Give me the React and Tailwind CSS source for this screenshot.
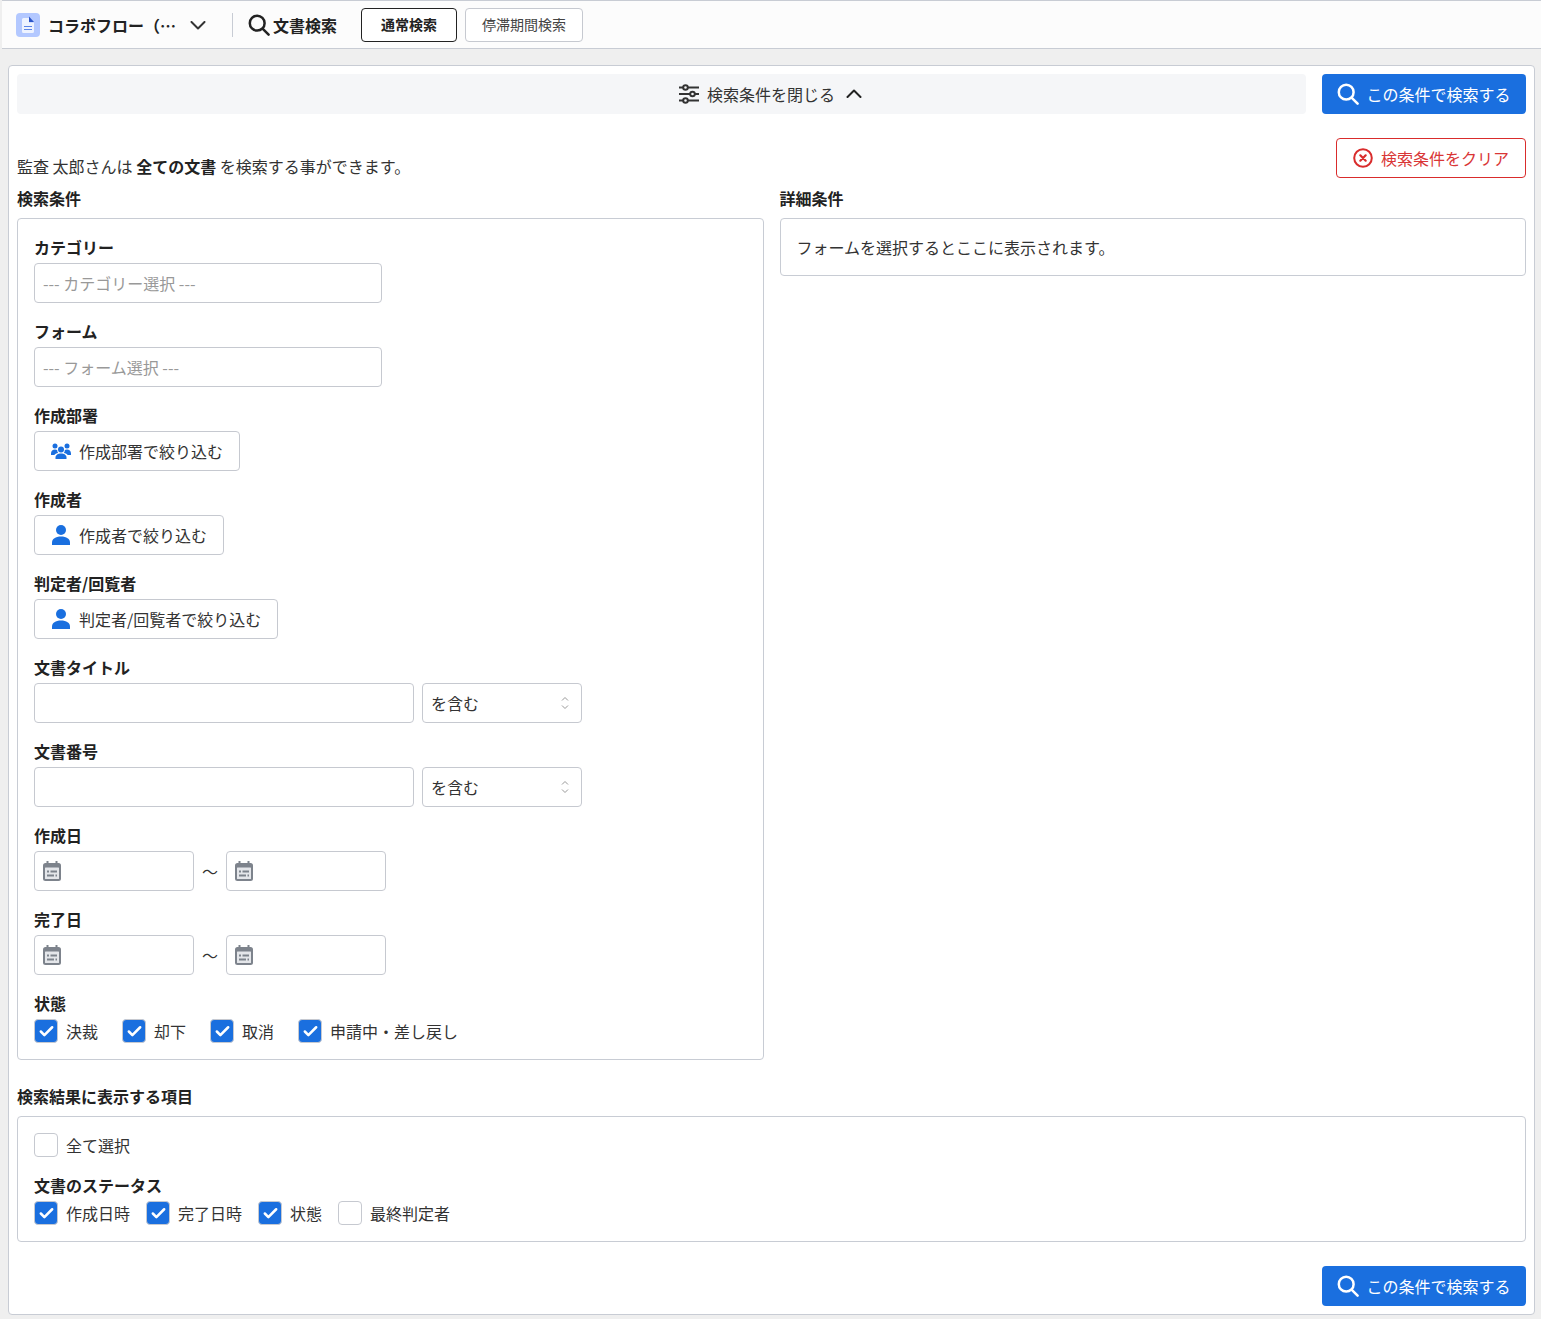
import { Check } from "lucide-react";

function SearchIcon({ className }) {
  return (
    <svg viewBox="0 0 22 22" className={className} fill="none" stroke="currentColor" strokeWidth="2.5" strokeLinecap="round">
      <circle cx="9.200" cy="9.200" r="7.400" />
      <path d="M14.800 14.800 20.600 20.600" />
    </svg>
  );
}

function Chevron({ up, className }) {
  return (
    <svg viewBox="0 0 16 9" className={"w-4 h-[9px] shrink-0 " + className} fill="none" stroke="currentColor" strokeWidth="2" strokeLinecap="round" strokeLinejoin="round">
      <path d={up ? "M1.500 8 8 1.500 14.500 8" : "M1.500 1 8 7.500 14.500 1"} />
    </svg>
  );
}

function DocIcon() {
  return (
    <svg viewBox="0 0 24 24" className="w-6 h-6 shrink-0">
      <rect width="24" height="24" rx="4" fill="#b3c8ff" />
      <path d="M6 6.500A1.500 1.500 0 0 1 7.500 5H13v4.500h5v9A1.500 1.500 0 0 1 16.500 20h-9A1.500 1.500 0 0 1 6 18.500z" fill="#eef3ff" />
      <path d="M13 3.500 18 9h-5z" fill="#2a55c8" />
      <path d="M8 13.500h8M8 16.500h8" stroke="#5b84e6" strokeWidth="1.200" />
    </svg>
  );
}

function SlidersIcon() {
  return (
    <svg viewBox="0 0 20 20" className="w-5 h-5 text-[#333]" fill="none" stroke="currentColor" strokeWidth="2">
      <path d="M0 3.500h4M9 3.500h11M0 10h11M16 10h4M0 16.500h4M9 16.500h11" />
      <circle cx="6.500" cy="3.500" r="2.300" />
      <circle cx="13.500" cy="10" r="2.300" />
      <circle cx="6.500" cy="16.500" r="2.300" />
    </svg>
  );
}

function ClearIcon() {
  return (
    <svg viewBox="0 0 20 20" className="w-5 h-5 text-[#d92c2c]" fill="none" stroke="currentColor" strokeWidth="2" strokeLinecap="round">
      <circle cx="10" cy="10" r="8.800" />
      <path d="M7.300 7.300 12.700 12.700M12.700 7.300 7.300 12.700" strokeWidth="2.200" />
    </svg>
  );
}

function PersonIcon() {
  return (
    <svg viewBox="0 0 20 20" className="w-5 h-5 shrink-0 text-[#1a6fdf]" fill="currentColor">
      <circle cx="10" cy="5" r="5" />
      <path d="M1 20v-2.500C1 14 4.500 11.500 10 11.500s9 2.500 9 6V20z" />
    </svg>
  );
}

function TeamIcon() {
  return (
    <svg viewBox="0 0 20 16" className="w-5 h-4 shrink-0 text-[#1a6fdf]" fill="currentColor">
      <circle cx="10" cy="6.500" r="3" />
      <circle cx="4" cy="3" r="2.500" />
      <circle cx="16" cy="3" r="2.500" />
      <path d="M4.500 16v-1.500C4.500 12 7 10.500 10 10.500s5.500 1.500 5.500 4V16z" />
      <path d="M0 10.500C0 8 1.800 6.500 4 6.500c.9 0 1.600.2 2.200.6a4.500 4.500 0 0 0 .9 3C5.300 10.500 4 11 3.400 12H0z" />
      <path d="M20 10.500C20 8 18.200 6.500 16 6.500c-.9 0-1.600.2-2.200.6a4.500 4.500 0 0 1-.9 3c1.800.4 3.100.9 3.700 1.900H20z" />
    </svg>
  );
}

function UpDownIcon() {
  return (
    <svg viewBox="0 0 8 14" className="w-2 h-[14px] text-[#999]" fill="none" stroke="currentColor" strokeWidth="1">
      <path d="M1 4.500 4 1.500 7 4.500M1 9.500 4 12.500 7 9.500" />
    </svg>
  );
}

function CalendarIcon() {
  return (
    <svg viewBox="0 0 18 20" className="w-[18px] h-5 shrink-0">
      <path d="M3.500 0h2v3h-2zM12.500 0h2v3h-2z" fill="#7d838c" />
      <rect y="2" width="18" height="18" rx="2.500" fill="#7d838c" />
      <rect x="2" y="6.500" width="14" height="11.500" rx="0.500" fill="#e4e6ea" />
      <path d="M4 9.500h2v2H4zM7.500 9.500H14v2H7.500zM4 13.500h7v2H4zM12.500 13.500H14v2h-1.500z" fill="#7d838c" />
    </svg>
  );
}

function Label({ children }) {
  return <div className="h-6 mb-1 text-base leading-6 font-bold text-[#222]">{children}</div>;
}

function Field({ label, children }) {
  return (
    <div className="mb-4">
      <Label>{label}</Label>
      {children}
    </div>
  );
}

function PickButton({ icon, children }) {
  return (
    <button className="h-10 flex items-center gap-2 px-4 border border-[#c6c9d0] rounded bg-white text-base text-[#333]">
      {icon}
      {children}
    </button>
  );
}

function TextWithMatch() {
  return (
    <div className="flex gap-2">
      <input className="w-[380px] h-10 border border-[#c6c9d0] rounded bg-white" />
      <div className="w-40 h-10 flex items-center justify-between pl-2 pr-[12px] border border-[#c6c9d0] rounded bg-white text-base text-[#333]">
        を含む
        <UpDownIcon />
      </div>
    </div>
  );
}

function DateBox() {
  return (
    <div className="w-40 h-10 flex items-center px-2 border border-[#c6c9d0] rounded bg-white">
      <CalendarIcon />
    </div>
  );
}

function DateRange() {
  return (
    <div className="flex items-center gap-2">
      <DateBox />
      <span className="w-4 text-base text-[#333]">〜</span>
      <DateBox />
    </div>
  );
}

function Checkbox({ checked, children }) {
  return (
    <label className="flex items-center gap-2 text-base leading-6 text-[#333]">
      {checked ? (
        <span className="w-6 h-6 flex items-center justify-center rounded bg-[#1a6fdf] border border-[#c6c9d0]">
          <Check size={17} strokeWidth={3.6} className="text-white" />
        </span>
      ) : (
        <span className="w-6 h-6 rounded bg-white border border-[#c6c9d0]" />
      )}
      {children}
    </label>
  );
}

function SearchButton() {
  return (
    <button className="w-[204px] h-10 flex items-center justify-center gap-[7px] rounded bg-[#1a6fdf] text-base text-white">
      <SearchIcon className="w-[22px] h-[22px]" />
      この条件で検索する
    </button>
  );
}

export default function App() {
  return (
    <div className="min-h-[1319px] bg-[#efefef] font-['Noto_Sans_CJK_JP','Noto_Sans',sans-serif]" lang="ja">
      <header className="h-[49px] ml-[2px] flex items-center pl-[14px] bg-[#fcfcfc] border-y border-[#c8ccd4]">
        <DocIcon />
        <span className="ml-2 w-[130px] text-base font-bold text-[#222] whitespace-nowrap">コラボフロー（…</span>
        <Chevron className="ml-3 mt-px text-[#333]" />
        <div className="ml-[26px] w-px h-6 bg-[#c8ccd4]" />
        <SearchIcon className="ml-[15px] w-[22px] h-[22px] text-[#222]" />
        <span className="ml-[3px] text-base font-bold text-[#222]">文書検索</span>
        <button className="ml-6 h-[34px] w-24 pb-[2px] rounded border border-[#222] bg-white text-sm font-bold text-[#222]">通常検索</button>
        <button className="ml-2 h-[34px] w-[118px] pb-[2px] rounded border border-[#c6c9d0] bg-white text-sm text-[#444]">停滞期間検索</button>
      </header>

      <main className="mt-4 ml-2 mr-[6px] p-2 bg-white border border-[#c8ccd4] rounded">
        <div className="flex gap-4">
          <div className="flex-1 h-10 pl-[218px] flex items-center justify-center gap-2 rounded bg-[#f5f6f8] text-base text-[#333]">
            <SlidersIcon />
            検索条件を閉じる
            <Chevron up className="ml-[3px] -mt-px text-[#222]" />
          </div>
          <SearchButton />
        </div>

        <div className="mt-6 h-10 flex items-end justify-between">
          <p className="text-base leading-6 text-[#333]">
            監査 太郎さんは <b className="font-bold text-[#222]">全ての文書</b> を検索する事ができます。
          </p>
          <button className="h-10 w-[190px] flex items-center justify-center gap-2 rounded border border-[#d92c2c] bg-white text-base text-[#d93636]">
            <ClearIcon />
            検索条件をクリア
          </button>
        </div>

        <div className="mt-2 grid grid-cols-2 gap-4 items-start">
          <section>
            <div className="h-6 mb-2 text-base leading-6 font-bold text-[#222]">検索条件</div>
            <div className="p-4 pb-0 border border-[#c8ccd4] rounded">
              <Field label="カテゴリー">
                <div className="w-[348px] h-10 flex items-center px-2 border border-[#c6c9d0] rounded text-base text-[#999]">--- カテゴリー選択 ---</div>
              </Field>
              <Field label="フォーム">
                <div className="w-[348px] h-10 flex items-center px-2 border border-[#c6c9d0] rounded text-base text-[#999]">--- フォーム選択 ---</div>
              </Field>
              <Field label="作成部署">
                <div className="flex">
                  <PickButton icon={<TeamIcon />}>作成部署で絞り込む</PickButton>
                </div>
              </Field>
              <Field label="作成者">
                <div className="flex">
                  <PickButton icon={<PersonIcon />}>作成者で絞り込む</PickButton>
                </div>
              </Field>
              <Field label="判定者/回覧者">
                <div className="flex">
                  <PickButton icon={<PersonIcon />}>判定者/回覧者で絞り込む</PickButton>
                </div>
              </Field>
              <Field label="文書タイトル">
                <TextWithMatch />
              </Field>
              <Field label="文書番号">
                <TextWithMatch />
              </Field>
              <Field label="作成日">
                <DateRange />
              </Field>
              <Field label="完了日">
                <DateRange />
              </Field>
              <Field label="状態">
                <div className="flex gap-6">
                  <Checkbox checked>決裁</Checkbox>
                  <Checkbox checked>却下</Checkbox>
                  <Checkbox checked>取消</Checkbox>
                  <Checkbox checked>申請中・差し戻し</Checkbox>
                </div>
              </Field>
            </div>
          </section>

          <section>
            <div className="h-6 mb-2 text-base leading-6 font-bold text-[#222]">詳細条件</div>
            <div className="h-[58px] flex items-center px-4 border border-[#c8ccd4] rounded text-base text-[#333]">
              フォームを選択するとここに表示されます。
            </div>
          </section>
        </div>

        <div className="mt-6 h-6 mb-2 text-base leading-6 font-bold text-[#222]">検索結果に表示する項目</div>
        <div className="p-4 border border-[#c8ccd4] rounded">
          <Checkbox>全て選択</Checkbox>
          <div className="mt-4">
            <Label>文書のステータス</Label>
            <div className="flex gap-4">
              <Checkbox checked>作成日時</Checkbox>
              <Checkbox checked>完了日時</Checkbox>
              <Checkbox checked>状態</Checkbox>
              <Checkbox>最終判定者</Checkbox>
            </div>
          </div>
        </div>

        <div className="mt-6 flex justify-end">
          <SearchButton />
        </div>
      </main>
    </div>
  );
}
